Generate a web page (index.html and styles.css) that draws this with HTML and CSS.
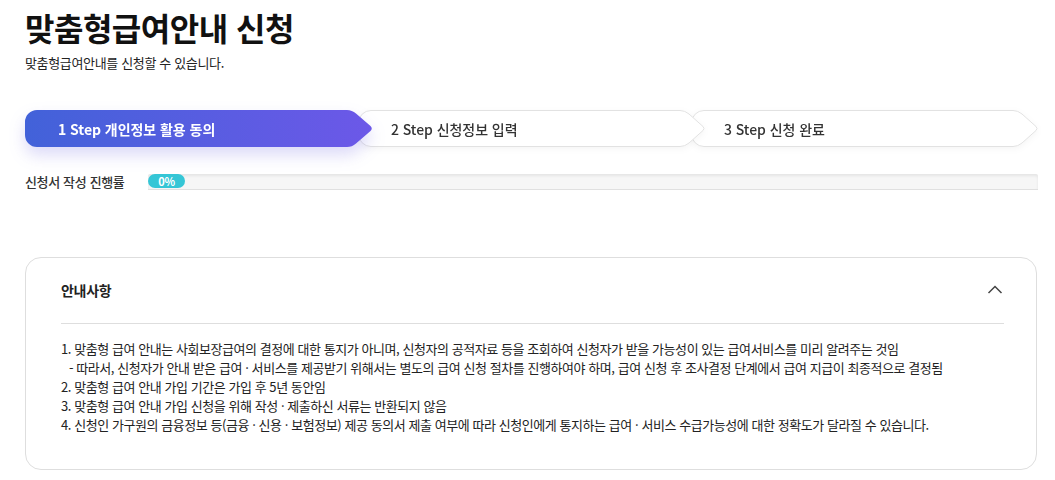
FILE: index.html
```html
<!DOCTYPE html>
<html lang="ko">
<head>
<meta charset="utf-8">
<title>맞춤형급여안내 신청</title>
<link rel="stylesheet" href="styles.css">
</head>
<body>
<main class="page">
  <h1 class="title">맞춤형급여안내 신청</h1>
  <p class="subtitle">맞춤형급여안내를 신청할 수 있습니다.</p>

  <ol class="steps">
    <li class="step step-active">
      <svg class="step-bg" viewBox="0 0 348 37" preserveAspectRatio="none" aria-hidden="true">
        <defs>
          <linearGradient id="g1" x1="0" y1="0" x2="1" y2="0">
            <stop offset="0" stop-color="#4262d9"/>
            <stop offset="1" stop-color="#6c58e8"/>
          </linearGradient>
        </defs>
        <path d="M12,0 H322 Q327,0 331,3.5 L345.5,16 Q348,18.5 345.5,21 L331,33.5 Q327,37 322,37 H12 A12,12 0 0 1 0,25 V12 A12,12 0 0 1 12,0 Z" fill="url(#g1)"/>
      </svg>
      <span class="step-label">1 Step 개인정보 활용 동의</span>
    </li>
    <li class="step step-2">
      <svg class="step-bg" viewBox="0 0 348 37" preserveAspectRatio="none" aria-hidden="true">
        <path d="M13,0.5 H322 Q327,0.5 331,4 L345,16.5 Q347,18.5 345,20.5 L331,33 Q327,36.5 322,36.5 H13 A12.5,12.5 0 0 1 0.5,24 V13 A12.5,12.5 0 0 1 13,0.5 Z" fill="#fff" stroke="#e2e2e2" stroke-width="1"/>
      </svg>
      <span class="step-label">2 Step 신청정보 입력</span>
    </li>
    <li class="step step-3">
      <svg class="step-bg" viewBox="0 0 348 37" preserveAspectRatio="none" aria-hidden="true">
        <path d="M13,0.5 H322 Q327,0.5 331,4 L345,16.5 Q347,18.5 345,20.5 L331,33 Q327,36.5 322,36.5 H13 A12.5,12.5 0 0 1 0.5,24 V13 A12.5,12.5 0 0 1 13,0.5 Z" fill="#fff" stroke="#e2e2e2" stroke-width="1"/>
      </svg>
      <span class="step-label">3 Step 신청 완료</span>
    </li>
  </ol>

  <div class="progress">
    <span class="progress-label">신청서 작성 진행률</span>
    <div class="progress-track">
      <span class="progress-fill">0%</span>
    </div>
  </div>

  <section class="notice">
    <div class="notice-head">
      <h2 class="notice-title">안내사항</h2>
      <svg class="chevron" width="16" height="9" viewBox="0 0 16 9" aria-hidden="true">
        <path d="M1.5,8 L8,1.5 L14.5,8" fill="none" stroke="#444" stroke-width="1.5"/>
      </svg>
    </div>
    <ul class="notice-list">
      <li>1. 맞춤형 급여 안내는 사회보장급여의 결정에 대한 통지가 아니며, 신청자의 공적자료 등을 조회하여 신청자가 받을 가능성이 있는 급여서비스를 미리 알려주는 것임</li>
      <li class="sub">- 따라서, 신청자가 안내 받은 급여 · 서비스를 제공받기 위해서는 별도의 급여 신청 절차를 진행하여야 하며, 급여 신청 후 조사결정 단계에서 급여 지급이 최종적으로 결정됨</li>
      <li>2. 맞춤형 급여 안내 가입 기간은 가입 후 5년 동안임</li>
      <li>3. 맞춤형 급여 안내 가입 신청을 위해 작성 · 제출하신 서류는 반환되지 않음</li>
      <li>4. 신청인 가구원의 금융정보 등(금융 · 신용 · 보험정보) 제공 동의서 제출 여부에 따라 신청인에게 통지하는 급여 · 서비스 수급가능성에 대한 정확도가 달라질 수 있습니다.</li>
    </ul>
  </section>
</main>
</body>
</html>
```

FILE: styles.css
```css
* {
  box-sizing: border-box;
}

html, body {
  margin: 0;
  padding: 0;
  background: #fff;
}

body {
  font-family: "Noto Sans CJK KR", "Noto Sans", sans-serif;
  color: #222;
}

.page {
  width: 1013px;
  margin-left: 25px;
  padding-top: 7px;
}

.title {
  margin: 0;
  font-size: 32px;
  line-height: 40px;
  font-weight: 700;
  color: #111;
  letter-spacing: -0.5px;
}

.subtitle {
  margin: 6px 0 0;
  font-size: 13px;
  line-height: 20px;
  color: #222;
  letter-spacing: -0.35px;
}

.steps {
  list-style: none;
  margin: 37px 0 0;
  padding: 0;
  display: flex;
}

.step {
  position: relative;
  width: 348px;
  height: 37px;
  display: flex;
  align-items: center;
  padding-left: 33px;
  flex: none;
}

.step + .step {
  margin-left: -15px;
}

.step-active {
  z-index: 3;
  filter: drop-shadow(0 8px 8px rgba(95, 85, 225, 0.22));
}

.step-2 {
  z-index: 2;
  filter: drop-shadow(0 2px 3px rgba(0, 0, 0, 0.04));
}

.step-3 {
  z-index: 1;
  filter: drop-shadow(0 2px 3px rgba(0, 0, 0, 0.04));
}

.step-bg {
  position: absolute;
  left: 0;
  top: 0;
  width: 100%;
  height: 100%;
}

.step-label {
  position: relative;
  font-size: 14px;
  font-weight: 500;
  color: #333;
  letter-spacing: -0.05px;
}

.step-active .step-label {
  color: #fff;
  font-weight: 700;
}

.progress {
  display: flex;
  align-items: center;
  margin-top: 25px;
}

.progress-label {
  width: 123px;
  flex: none;
  font-size: 13px;
  color: #333;
  font-weight: 500;
  letter-spacing: -0.35px;
}

.progress-track {
  flex: 1;
  height: 16px;
  background: #f6f6f6;
  border-bottom: 1px solid #e0e0e0;
  box-shadow: inset 0 2px 3px rgba(0, 0, 0, 0.07);
  display: flex;
  align-items: center;
  border-radius: 2px 2px 0 0;
}

.progress-fill {
  width: 37px;
  height: 14px;
  border-radius: 7px;
  background: #35c6d6;
  color: #fff;
  font-size: 11px;
  font-weight: 700;
  line-height: 14px;
  text-align: center;
  letter-spacing: -0.3px;
}

.notice {
  margin-top: 66px;
  width: 1012px;
  border: 1px solid #dedede;
  border-radius: 16px;
  padding: 0 32px 35px 35px;
}

.notice-head {
  height: 66px;
  display: flex;
  align-items: center;
  justify-content: space-between;
  border-bottom: 1px solid #dedede;
  padding-bottom: 2px;
}

.notice-title {
  margin: 0;
  font-size: 14px;
  font-weight: 700;
  color: #222;
  letter-spacing: -0.3px;
}

.chevron {
  margin-right: 1px;
  display: block;
}

.notice-list {
  list-style: none;
  margin: 0;
  padding: 15px 0 0;
}

.notice-list li {
  font-size: 13px;
  line-height: 19px;
  color: #222;
  letter-spacing: -0.44px;
}

.notice-list li.sub {
  padding-left: 8px;
}
```
